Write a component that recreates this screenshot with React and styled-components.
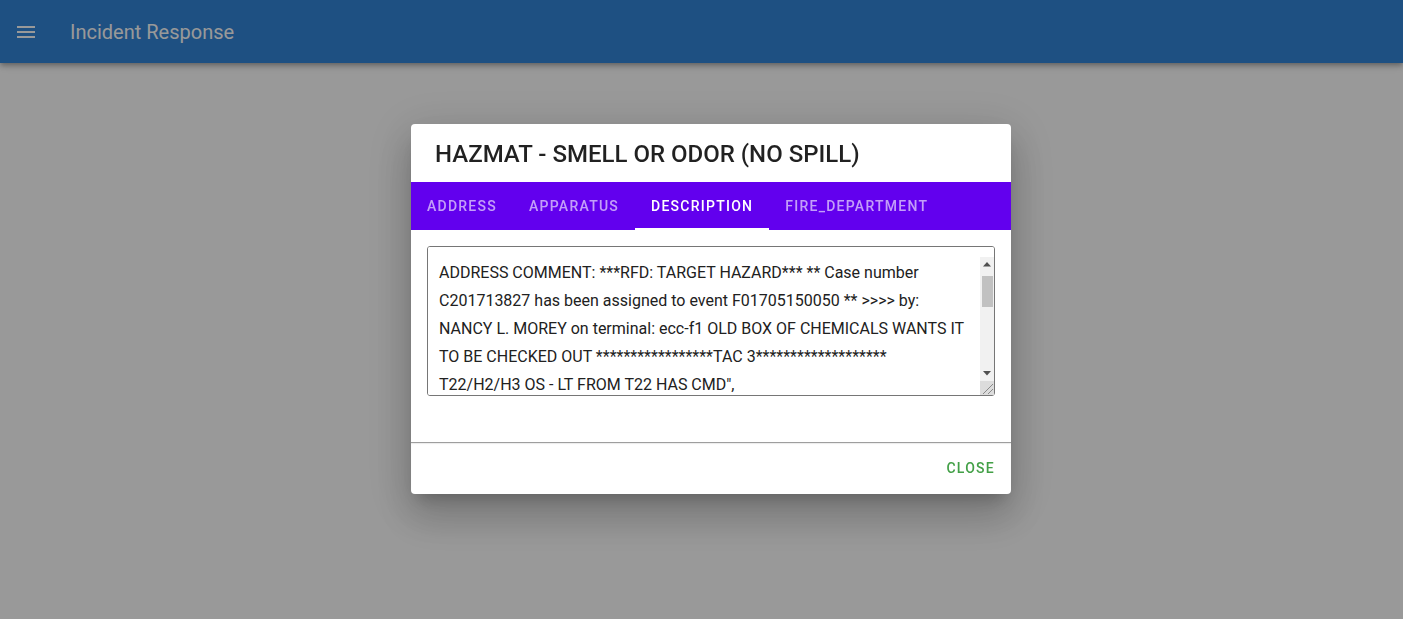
import React, { useState } from "react";
import styled, { createGlobalStyle } from "styled-components";

const TABS = ["address", "apparatus", "description", "fire_department"];

const DESCRIPTION =
  'ADDRESS COMMENT: ***RFD: TARGET HAZARD*** ** Case number C201713827 has been assigned to event F01705150050 ** >>>> by: NANCY L. MOREY on terminal: ecc-f1 OLD BOX OF CHEMICALS WANTS IT TO BE CHECKED OUT *****************TAC 3******************* T22/H2/H3 OS - LT FROM T22 HAS CMD",\n' +
  "E16 ASSIGNED TO INVESTIGATE ODOR IN BASEMENT STORAGE ROOM. RP STATES BOX WAS FOUND DURING CLEANOUT, CONTAINERS APPEAR UNLABELED. NO LEAK OR SPILL OBSERVED. " +
  "HAZMAT 1 REQUESTED FOR IDENTIFICATION. OCCUPANTS EVACUATED AS A PRECAUTION, NO INJURIES REPORTED. " +
  "HM1 ON SCENE, ENTRY TEAM IN LEVEL B. METERS READING NORMAL AT DOORWAY. CONTAINERS OVERPACKED AND TURNED OVER TO OWNER FOR PROPER DISPOSAL. " +
  "ALL UNITS AVAILABLE, CMD TERMINATED.";

const GlobalStyle = createGlobalStyle`
  html, body {
    margin: 0;
    height: 100%;
    background: #fff;
    font-family: Roboto, "Noto Sans", sans-serif;
  }
  * { box-sizing: border-box; }
`;

const AppBar = styled.header`
  height: 63px;
  display: flex;
  align-items: center;
  gap: 32px;
  padding: 0 14px;
  background: #3285d9;
  color: #fff;
  box-shadow: 0 2px 4px -1px rgba(0, 0, 0, 0.2), 0 4px 5px 0 rgba(0, 0, 0, 0.14),
    0 1px 10px 0 rgba(0, 0, 0, 0.12);
`;

const MenuButton = styled.button`
  display: flex;
  padding: 0;
  border: none;
  background: none;
  color: inherit;
  cursor: pointer;
`;

const AppTitle = styled.h1`
  margin: 0;
  font-size: 20px;
  font-weight: 400;
  letter-spacing: 0;
`;

const Scrim = styled.div`
  position: fixed;
  inset: 0;
  display: flex;
  align-items: center;
  justify-content: center;
  padding: 0 0 2px 19px;
  background: rgba(0, 0, 0, 0.4);
`;

const Dialog = styled.div`
  width: 600px;
  background: #fff;
  border-radius: 4px;
  overflow: hidden;
  display: flex;
  flex-direction: column;
  box-shadow: 0 11px 15px -7px rgba(0, 0, 0, 0.2), 0 24px 38px 3px rgba(0, 0, 0, 0.14),
    0 9px 46px 8px rgba(0, 0, 0, 0.12);
`;

const Title = styled.h2`
  margin: 0;
  height: 58px;
  display: flex;
  align-items: center;
  padding: 3px 24px 0;
  font-size: 24px;
  font-weight: 500;
  color: rgba(0, 0, 0, 0.87);
  letter-spacing: 0;
`;

const TabBar = styled.nav`
  display: flex;
  height: 48px;
  background: #6200ee;
`;

const Tab = styled.button`
  position: relative;
  padding: 0 16px;
  border: none;
  background: none;
  cursor: pointer;
  font-family: Roboto, sans-serif;
  font-size: 14px;
  font-weight: 500;
  letter-spacing: 1.25px;
  text-transform: uppercase;
  color: ${(p) => (p.active ? "#fff" : "rgba(255, 255, 255, 0.62)")};
  &::after {
    content: "";
    position: absolute;
    left: 0;
    right: 0;
    bottom: 0;
    height: 2px;
    background: ${(p) => (p.active ? "#fff" : "transparent")};
  }
`;

const Content = styled.div`
  height: 212px;
  padding: 16px 16px 0;
`;

const Field = styled.div`
  position: relative;
  width: 568px;
  height: 150px;
`;

const TextBox = styled.textarea`
  display: block;
  width: 100%;
  height: 100%;
  padding: 12px 26px 11px 11px;
  border: 1px solid #767676;
  border-radius: 3px;
  font-family: Roboto, sans-serif;
  font-size: 16px;
  line-height: 28px;
  color: #212121;
  resize: none;
  outline: none;
  overflow-y: scroll;
  scrollbar-width: none;
  &::-webkit-scrollbar {
    display: none;
  }
`;

const ScrollBar = styled.div`
  position: absolute;
  top: 11px;
  right: 1px;
  bottom: 1px;
  width: 14px;
  display: flex;
  flex-direction: column;
  background: #f1f1f1;
`;

const ArrowButton = styled.div`
  height: 15px;
  display: flex;
  align-items: center;
  justify-content: center;
  color: #505050;
`;

const Track = styled.div`
  flex: 1;
  padding: 4px 1px 0 2px;
`;

const Thumb = styled.div`
  height: 31px;
  background: #c1c1c1;
`;

const Resizer = styled.div`
  height: 14px;
  display: flex;
  background: #dcdcdc;
`;

const Actions = styled.div`
  height: 52px;
  display: flex;
  align-items: center;
  justify-content: flex-end;
  padding: 0 8px;
  border-top: 1px solid #9e9e9e;
  box-shadow: inset 0 1px 1px rgba(0, 0, 0, 0.08);
`;

const TextButton = styled.button`
  padding: 0 8px;
  height: 36px;
  border: none;
  background: none;
  cursor: pointer;
  font-family: Roboto, sans-serif;
  font-size: 14px;
  font-weight: 500;
  letter-spacing: 1.25px;
  text-transform: uppercase;
  color: #43a047;
`;

function MenuIcon() {
  return (
    <svg width="24" height="24" viewBox="0 0 24 24" fill="currentColor">
      <path d="M3 18h18v-2H3v2zm0-5h18v-2H3v2zm0-7v2h18V6H3z" />
    </svg>
  );
}

function Triangle({ down }) {
  return (
    <svg width="8" height="5" viewBox="0 0 8 5" fill="currentColor">
      <polygon points={down ? "0,0 8,0 4,4.5" : "0,4.5 8,4.5 4,0"} />
    </svg>
  );
}

function Scroller() {
  return (
    <ScrollBar aria-hidden>
      <ArrowButton>
        <Triangle />
      </ArrowButton>
      <Track>
        <Thumb />
      </Track>
      <ArrowButton>
        <Triangle down />
      </ArrowButton>
      <Resizer>
        <svg width="14" height="14" viewBox="0 0 14 14" stroke="#8a8a8a" strokeWidth="1">
          <line x1="3" y1="13" x2="13" y2="3" />
          <line x1="8" y1="13" x2="13" y2="8" />
        </svg>
      </Resizer>
    </ScrollBar>
  );
}

export default function App() {
  const [tab, setTab] = useState("description");

  return (
    <>
      <GlobalStyle />
      <AppBar>
        <MenuButton aria-label="menu">
          <MenuIcon />
        </MenuButton>
        <AppTitle>Incident Response</AppTitle>
      </AppBar>
      <Scrim>
        <Dialog role="dialog">
          <Title>HAZMAT - SMELL OR ODOR (NO SPILL)</Title>
          <TabBar>
            {TABS.map((t) => (
              <Tab key={t} active={t === tab} onClick={() => setTab(t)}>
                {t}
              </Tab>
            ))}
          </TabBar>
          <Content>
            <Field>
              <TextBox readOnly defaultValue={DESCRIPTION} />
              <Scroller />
            </Field>
          </Content>
          <Actions>
            <TextButton>Close</TextButton>
          </Actions>
        </Dialog>
      </Scrim>
    </>
  );
}
